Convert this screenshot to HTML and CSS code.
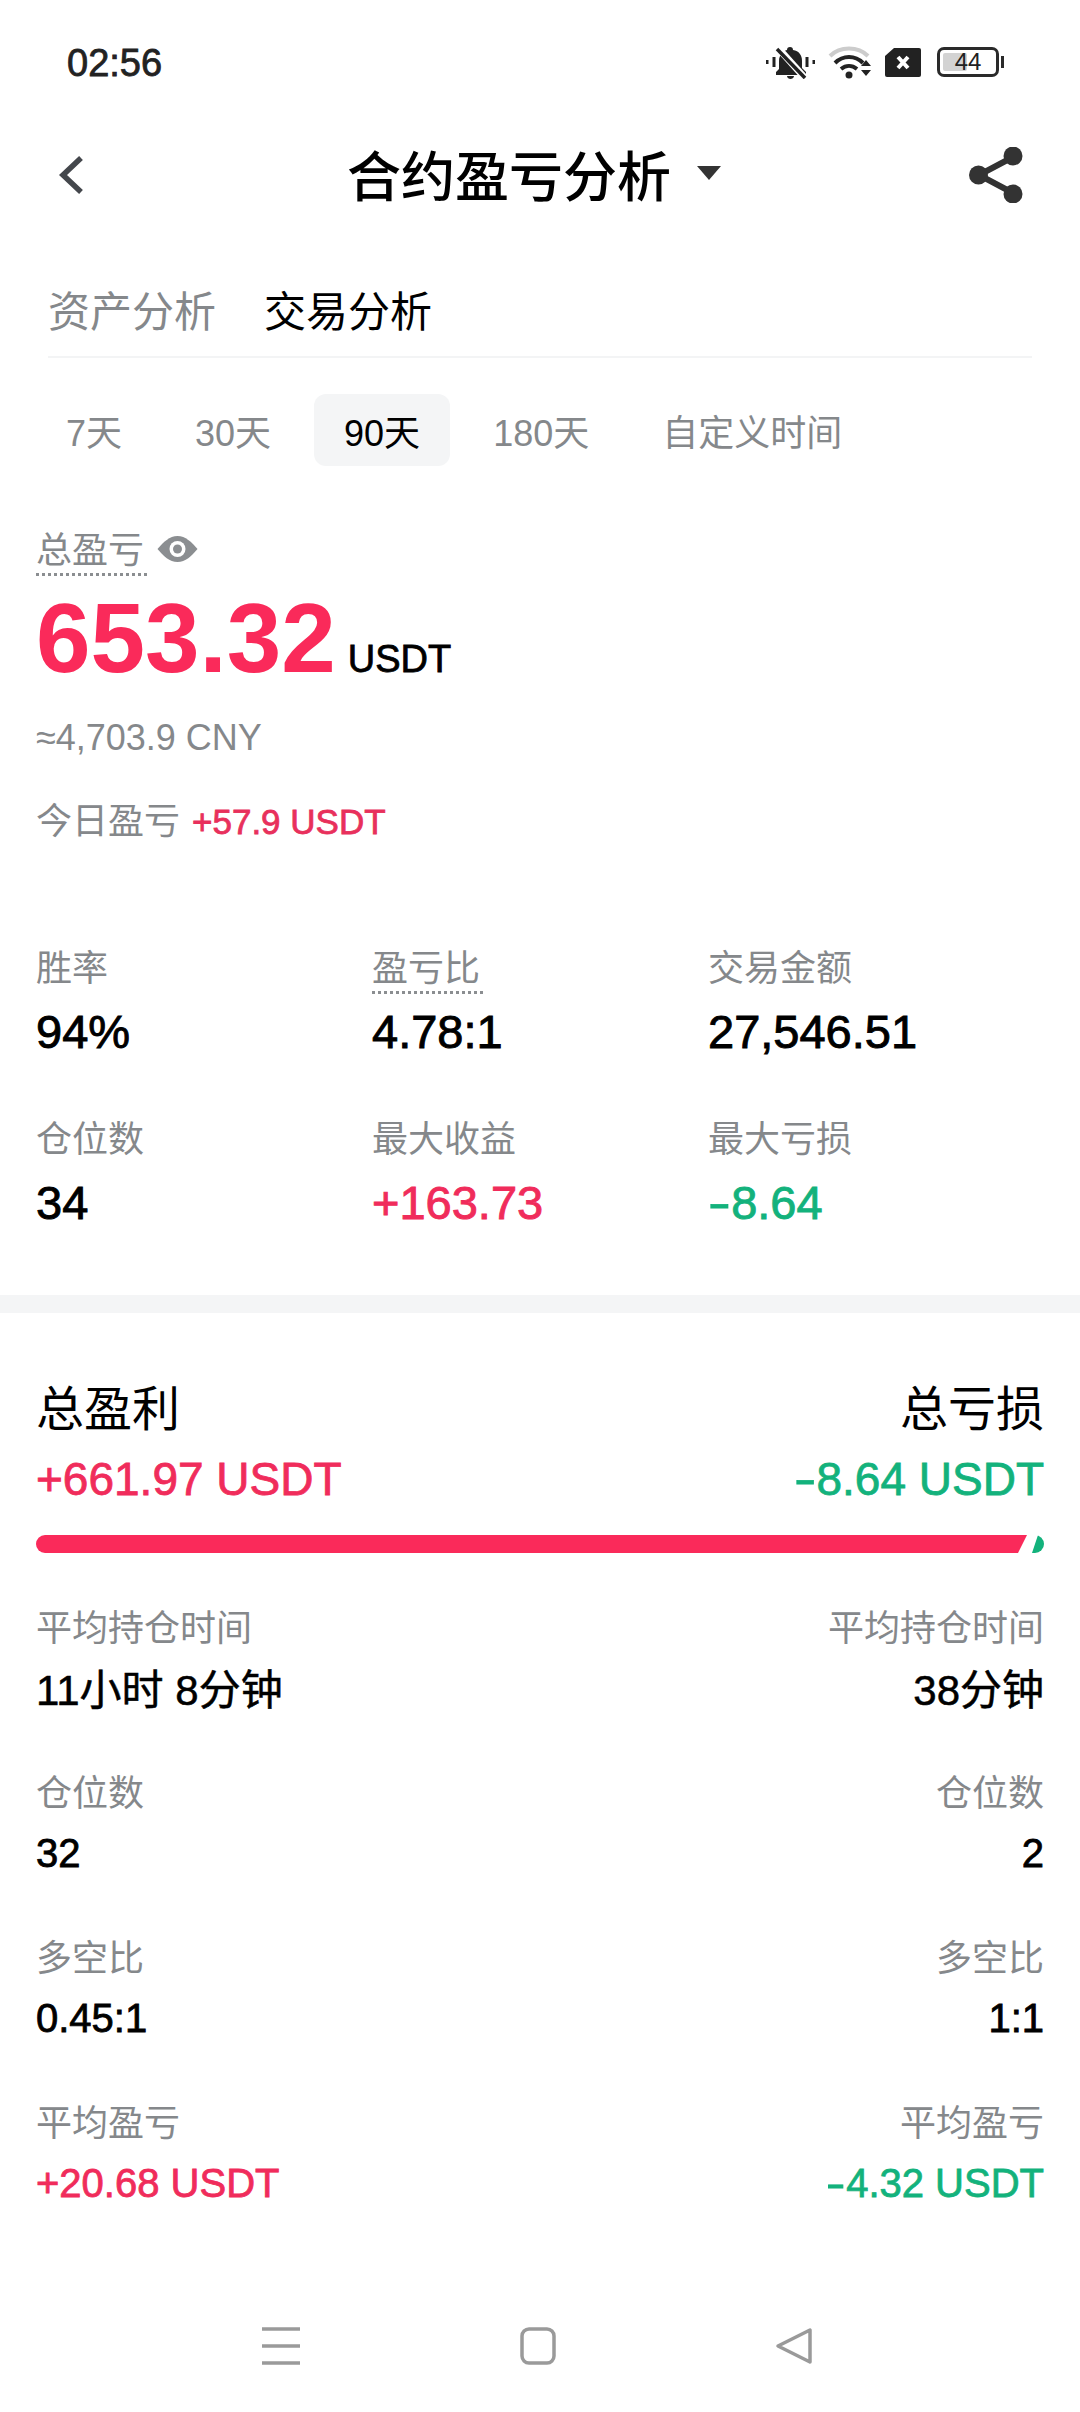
FILE: index.html
```html
<!DOCTYPE html>
<html lang="zh-CN">
<head>
<meta charset="UTF-8">
<meta name="viewport" content="width=device-width, initial-scale=1.0">
<title>合约盈亏分析</title>
<link rel="stylesheet" href="styles.css">
</head>
<body>
<div class="app">
  <div class="status-bar">
    <span class="clock">02:56</span>
    <div class="status-icons">
      <svg class="ic-bell" viewBox="0 0 49 33">
        <path fill="#222" d="M24 1c2 0 3 1 3 3 6 1 9 5 9 11v7l4 4v3H10v-3l3-3v-8c0-6 4-10 8-11 0-2 1-3 3-3zM21 30h7c0 2-2 3-3.500 3S21 32 21 30z"/>
        <path stroke="#fff" stroke-width="7" d="M12 2l27 30"/>
        <path stroke="#222" stroke-width="3.500" d="M11 3l28 29"/>
        <path stroke="#222" stroke-width="3" d="M1 14v4M8 11v10M41 11v10M48 14v4"/>
      </svg>
      <svg class="ic-wifi" viewBox="0 0 44 34">
        <path fill="none" stroke="#ccc" stroke-width="4" d="M2 11C12 1 30 1 40 11"/>
        <path fill="none" stroke="#222" stroke-width="4" d="M7 18c8-8 20-8 28 0"/>
        <path fill="none" stroke="#222" stroke-width="4" d="M13 24c5-4 11-4 16 0"/>
        <circle cx="21" cy="30" r="3.500" fill="#222"/>
        <path fill="#222" d="M38 15l5 6H33zM33 25h10l-5 6z"/>
      </svg>
      <svg class="ic-sim" viewBox="0 0 36 29">
        <path fill="#222" d="M9 0h25a2 2 0 0 1 2 2v25a2 2 0 0 1-2 2H2a2 2 0 0 1-2-2V8z"/>
        <path stroke="#fff" stroke-width="4" d="M13 9l10 11M23 9L13 20"/>
      </svg>
      <div class="battery">
        <div class="battery-body">
          <div class="battery-level"></div>
          <span class="battery-num">44</span>
        </div>
        <div class="battery-cap"></div>
      </div>
    </div>
  </div>

  <div class="header">
    <svg class="ic-back" viewBox="0 0 26 40">
      <path fill="none" stroke="#44474c" stroke-width="5.500" d="M23 3L5 20l18 17"/>
    </svg>
    <div class="title">
      <span>合约盈亏分析</span>
      <svg class="ic-caret" viewBox="0 0 24 14"><path fill="#333" d="M0 0h24L12 14z"/></svg>
    </div>
    <svg class="ic-share" viewBox="0 0 54 56">
      <path fill="none" stroke="#333" stroke-width="6" d="M44 10L10 28l34 18"/>
      <circle cx="44" cy="9" r="9.500" fill="#333"/>
      <circle cx="9.500" cy="28" r="9.500" fill="#333"/>
      <circle cx="44" cy="47" r="9.500" fill="#333"/>
    </svg>
  </div>

  <div class="tabs">
    <span class="tab">资产分析</span>
    <span class="tab tab-on">交易分析</span>
  </div>

  <div class="ranges">
    <span class="range">7天</span>
    <span class="range">30天</span>
    <span class="range range-on">90天</span>
    <span class="range">180天</span>
    <span class="range">自定义时间</span>
  </div>

  <div class="summary">
    <div class="total-label">
      <span class="dotted">总盈亏</span>
      <svg class="ic-eye" viewBox="0 0 40 28">
        <path fill="#8b8e91" d="M20 1c8 0 14 6 20 13-6 7-12 13-20 13S6 21 0 14C6 7 12 1 20 1z"/>
        <circle cx="20" cy="14" r="8" fill="#fff"/>
        <circle cx="20" cy="14" r="4.500" fill="#8b8e91"/>
      </svg>
    </div>
    <div class="total-value"><span class="total-num">653.32</span><span class="total-unit">USDT</span></div>
    <div class="total-cny">≈4,703.9 CNY</div>
    <div class="today"><span>今日盈亏</span><span class="today-num">+57.9 USDT</span></div>
  </div>

  <div class="stats">
    <div class="stat"><span class="stat-label">胜率</span><span class="stat-value">94%</span></div>
    <div class="stat"><span class="stat-label"><span class="dotted">盈亏比</span></span><span class="stat-value">4.78:1</span></div>
    <div class="stat"><span class="stat-label">交易金额</span><span class="stat-value">27,546.51</span></div>
    <div class="stat"><span class="stat-label">仓位数</span><span class="stat-value">34</span></div>
    <div class="stat"><span class="stat-label">最大收益</span><span class="stat-value red">+163.73</span></div>
    <div class="stat"><span class="stat-label">最大亏损</span><span class="stat-value green"><span class="minus">-</span>8.64</span></div>
  </div>

  <div class="band"></div>

  <div class="compare">
    <div class="compare-head">
      <div class="side">
        <span class="side-title">总盈利</span>
        <span class="side-sum red">+661.97 USDT</span>
      </div>
      <div class="side side-right">
        <span class="side-title">总亏损</span>
        <span class="side-sum green"><span class="minus">-</span>8.64 USDT</span>
      </div>
    </div>
    <div class="bar">
      <div class="bar-win"></div>
      <div class="bar-loss"></div>
    </div>
    <div class="rows">
      <div class="row">
        <div class="side"><span class="row-label">平均持仓时间</span><span class="row-value row-time">11小时 8分钟</span></div>
        <div class="side side-right"><span class="row-label">平均持仓时间</span><span class="row-value row-time">38分钟</span></div>
      </div>
      <div class="row">
        <div class="side"><span class="row-label">仓位数</span><span class="row-value">32</span></div>
        <div class="side side-right"><span class="row-label">仓位数</span><span class="row-value">2</span></div>
      </div>
      <div class="row">
        <div class="side"><span class="row-label">多空比</span><span class="row-value">0.45:1</span></div>
        <div class="side side-right"><span class="row-label">多空比</span><span class="row-value">1:1</span></div>
      </div>
      <div class="row">
        <div class="side"><span class="row-label">平均盈亏</span><span class="row-value red">+20.68 USDT</span></div>
        <div class="side side-right"><span class="row-label">平均盈亏</span><span class="row-value green"><span class="minus">-</span>4.32 USDT</span></div>
      </div>
    </div>
  </div>

  <div class="nav">
    <svg class="ic-nav" viewBox="0 0 38 38">
      <path stroke="#9a9a9a" stroke-width="3.500" d="M0 2h38M0 19h38M0 36h38"/>
    </svg>
    <svg class="ic-nav" viewBox="0 0 38 38">
      <rect x="3" y="2" width="32" height="34" rx="7" fill="none" stroke="#9a9a9a" stroke-width="3.500"/>
    </svg>
    <svg class="ic-nav" viewBox="0 0 38 38">
      <path fill="none" stroke="#9a9a9a" stroke-width="3.500" stroke-linejoin="round" d="M35 3v32L3 19z"/>
    </svg>
  </div>
</div>
</body>
</html>
```

FILE: styles.css
```css
* {
  box-sizing: border-box;
}
body {
  margin: 0;
  background: #fff;
  font-family: "Liberation Sans", "Noto Sans CJK SC", sans-serif;
  color: #000;
}
.app {
  width: 1080px;
  height: 2412px;
  display: flex;
  flex-direction: column;
  overflow: hidden;
}
.red {
  color: #f02c5b;
}
.green {
  color: #13b27c;
}
.minus {
  display: inline-block;
  transform: scaleX(1.45);
  transform-origin: left center;
  margin-right: 0.16em;
}
svg {
  display: block;
  flex: none;
}

/* status bar */
.status-bar {
  height: 126px;
  padding: 0 76px 0 67px;
  display: flex;
  align-items: center;
  justify-content: space-between;
}
.clock {
  font-size: 38px;
  color: #222;
  -webkit-text-stroke: 0.8px #222;
}
.status-icons {
  display: flex;
  align-items: center;
  gap: 13px;
  margin-top: -2px;
}
.ic-bell {
  width: 49px;
  height: 33px;
}
.ic-wifi {
  width: 44px;
  height: 34px;
}
.ic-sim {
  width: 36px;
  height: 29px;
  margin-right: 3px;
}
.battery {
  display: flex;
  align-items: center;
  gap: 2px;
}
.battery-body {
  position: relative;
  width: 62px;
  height: 30px;
  border: 3px solid #2a2a2a;
  border-radius: 7px;
  display: flex;
  align-items: center;
  justify-content: center;
}
.battery-level {
  position: absolute;
  left: 3px;
  top: 3px;
  bottom: 3px;
  width: 24px;
  background: #d3d3d3;
  border-radius: 2px;
}
.battery-num {
  position: relative;
  font-size: 24px;
  color: #222;
}
.battery-cap {
  width: 3px;
  height: 12px;
  background: #2a2a2a;
}

/* header */
.header {
  position: relative;
  height: 98px;
  margin-bottom: 2px;
  padding: 0 57px 0 58px;
  display: flex;
  align-items: center;
  justify-content: space-between;
}
.ic-back {
  width: 26px;
  height: 40px;
}
.title {
  position: absolute;
  left: 347px;
  top: -4px;
  height: 102px;
  display: flex;
  align-items: center;
  gap: 26px;
  font-size: 54px;
  font-weight: 500;
}
.ic-caret {
  width: 24px;
  height: 14px;
}
.ic-share {
  width: 54px;
  height: 56px;
}

/* tabs */
.tabs {
  margin: 0 48px;
  height: 132px;
  padding-top: 35px;
  display: flex;
  align-items: center;
  gap: 48px;
  border-bottom: 2px solid #f3f4f5;
}
.tab {
  font-size: 42px;
  color: #85888b;
}
.tab-on {
  color: #000;
}

.ranges {
  margin-top: 36px;
  padding-left: 36px;
  display: flex;
  align-items: center;
  gap: 13px;
  height: 72px;
}
.range {
  height: 72px;
  padding: 0 30px;
  display: flex;
  align-items: center;
  font-size: 36px;
  color: #85888b;
  border-radius: 12px;
}
.range-on {
  background: #f4f5f6;
  color: #000;
}

/* summary block */
.summary {
  padding: 61px 36px 0;
}
.total-label {
  display: flex;
  align-items: center;
  gap: 10px;
  font-size: 36px;
  color: #85888b;
  height: 50px;
}
.dotted {
  display: inline-block;
  padding-right: 3px;
  border-bottom: 3px dotted #8b8e91;
  line-height: 44px;
}
.ic-eye {
  width: 41px;
  height: 28px;
  margin-bottom: 6px;
}
.total-value {
  display: flex;
  align-items: baseline;
  gap: 12px;
  margin-top: 4px;
  height: 114px;
}
.total-num {
  font-size: 98px;
  font-weight: 700;
  line-height: 114px;
  color: #fa2a5a;
}
.total-unit {
  font-size: 38px;
  -webkit-text-stroke: 0.8px #000;
}
.total-cny {
  margin-top: 21px;
  font-size: 36px;
  line-height: 44px;
  color: #85888b;
}
.today {
  margin-top: 37px;
  display: flex;
  align-items: center;
  gap: 12px;
  font-size: 36px;
  line-height: 50px;
  color: #85888b;
}
.today-num {
  font-size: 35px;
  color: #e8305c;
  -webkit-text-stroke: 0.8px #e8305c;
}

/* stats grid */
.stats {
  margin-top: 97px;
  padding: 0 36px;
  display: grid;
  grid-template-columns: repeat(3, 336px);
  row-gap: 55px;
}
.stat {
  display: flex;
  flex-direction: column;
  gap: 10px;
}
.stat-label {
  font-size: 36px;
  line-height: 50px;
  color: #85888b;
}
.stat-value {
  font-size: 47px;
  line-height: 56px;
  -webkit-text-stroke: 0.9px currentColor;
}

.band {
  height: 18px;
  margin-top: 64px;
  background: #f4f5f6;
}

/* profit and loss compare */
.compare {
  padding: 67px 36px 0;
}
.compare-head {
  display: flex;
  justify-content: space-between;
}
.side {
  display: flex;
  flex-direction: column;
  align-items: flex-start;
}
.side-right {
  align-items: flex-end;
}
.side-title {
  font-size: 48px;
  line-height: 60px;
}
.side-sum {
  margin-top: 9px;
  padding-bottom: 1px;
  font-size: 46px;
  line-height: 60px;
  -webkit-text-stroke: 0.8px currentColor;
}
.bar {
  margin-top: 25px;
  height: 18px;
  display: flex;
  justify-content: space-between;
}
.bar-win {
  width: 991px;
  background: #fa2a5a;
  border-radius: 9px 0 0 9px;
  clip-path: polygon(0 0, 100% 0, calc(100% - 9px) 100%, 0 100%);
}
.bar-loss {
  width: 12px;
  background: #13b27c;
  border-radius: 0 9px 9px 0;
  clip-path: polygon(6px 0, 100% 0, 100% 100%, 0 100%);
}
.rows {
  margin-top: 51px;
  display: flex;
  flex-direction: column;
  gap: 52px;
}
.row {
  display: flex;
  justify-content: space-between;
}
.row-label {
  font-size: 36px;
  line-height: 50px;
  color: #85888b;
}
.row-value {
  margin-top: 9px;
  padding-bottom: 4px;
  font-size: 40px;
  line-height: 50px;
  -webkit-text-stroke: 0.8px currentColor;
}
.row-time {
  margin-top: 12px;
  padding-bottom: 1px;
  font-size: 42px;
  -webkit-text-stroke: 0.5px currentColor;
}

/* bottom nav */
.nav {
  margin-top: auto;
  height: 130px;
  padding: 0 267px 3px 262px;
  display: flex;
  align-items: center;
  justify-content: space-between;
}
.ic-nav {
  width: 38px;
  height: 38px;
}
```
